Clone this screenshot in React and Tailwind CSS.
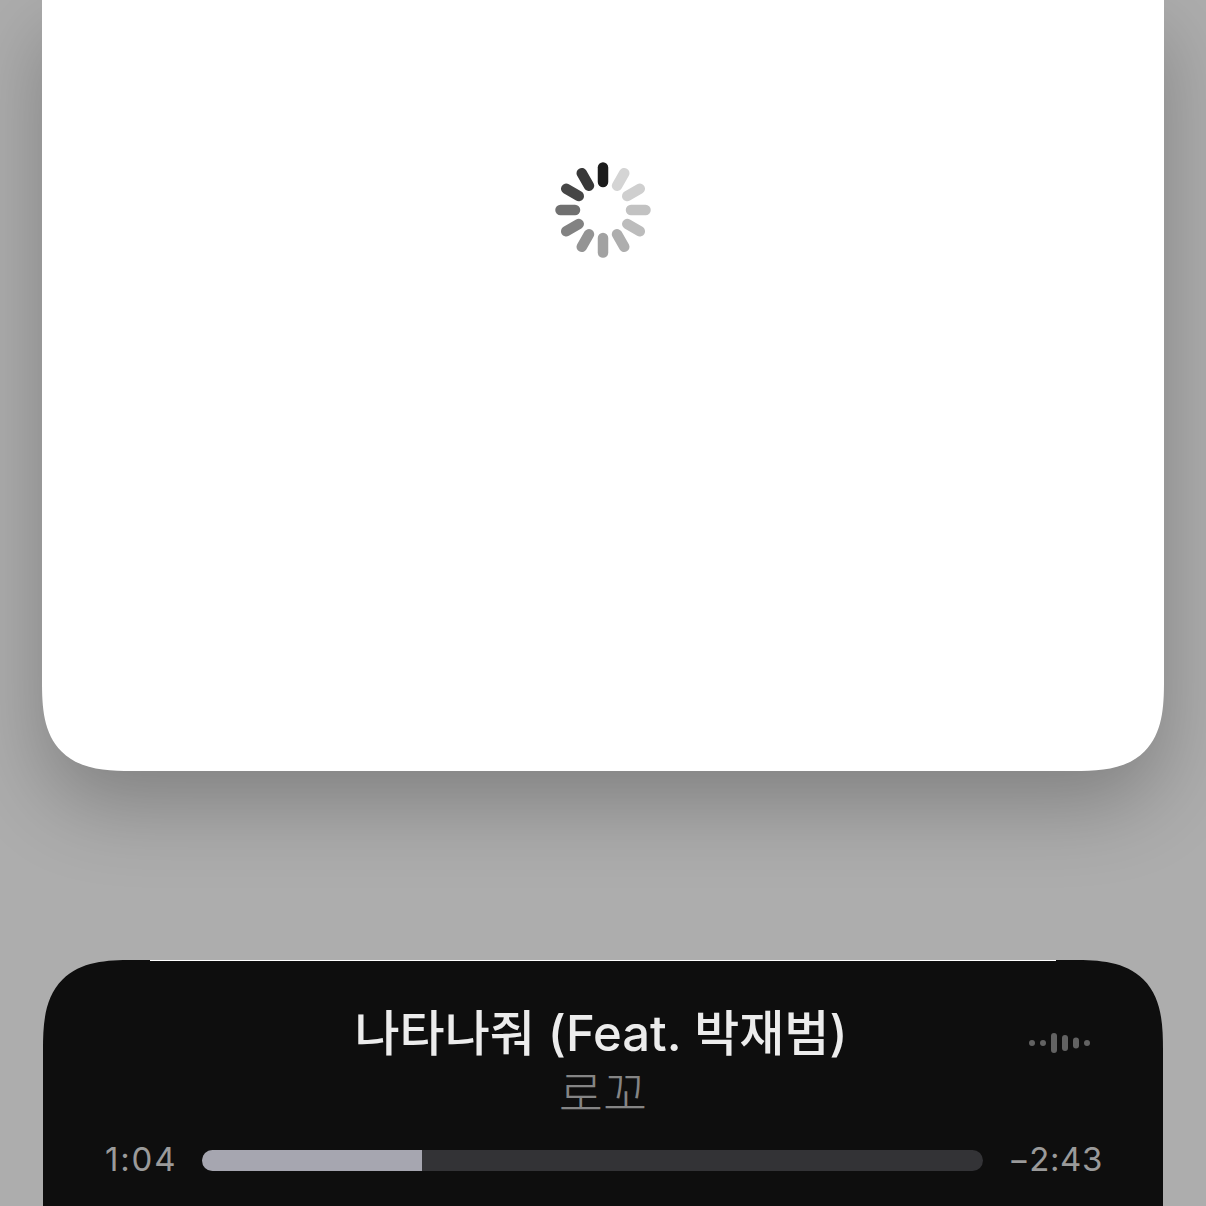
const TICKS = ["#1c1c1c", "#d4d4d4", "#cfcfcf", "#c2c2c2", "#bcbcbc", "#aeaeae", "#a2a2a2", "#949494", "#828282", "#707070", "#464646", "#383838"];

function Spinner() {
  return (
    <svg width="100" height="100" viewBox="-50 -50 100 100">
      {TICKS.map((color, i) => (
        <line
          key={i}
          x1="0"
          y1="-28"
          x2="0"
          y2="-42.5"
          stroke={color}
          strokeWidth="10.5"
          strokeLinecap="round"
          transform={`rotate(${i * 30})`}
        />
      ))}
    </svg>
  );
}

function Waveform() {
  return (
    <svg width="66" height="24" viewBox="0 0 66 24" fill="#626262">
      <circle cx="6" cy="12" r="3" />
      <circle cx="17" cy="12" r="3" />
      <rect x="25" y="2" width="6" height="20" rx="3" />
      <rect x="36" y="4" width="6" height="16" rx="3" />
      <rect x="47" y="6.5" width="6" height="11" rx="3" />
      <circle cx="61" cy="12" r="3" />
    </svg>
  );
}

export default function App() {
  return (
    <div className="h-[1206px] overflow-hidden bg-[#adadad] px-[42px] font-['Inter','Noto_Sans_CJK_KR',sans-serif]">
      {/* 카드 */}
      <div className="flex h-[771px] justify-center rounded-b-[90px] bg-white pt-[160px] shadow-[0_34px_80px_rgba(0,0,0,0.25)] [corner-shape:superellipse(1.5)]">
        <Spinner />
      </div>

      {/* 플레이어 */}
      <div className="relative mx-px mt-[189px] h-[246px] rounded-t-[90px] bg-[#0e0e0e] px-[61px] [corner-shape:superellipse(1.5)]">
        <div className="absolute left-[107px] right-[107px] top-0 h-px bg-white" />
        <div className="absolute right-[71px] top-[71px]">
          <Waveform />
        </div>
        <div className="flex flex-col items-center pt-[44px]">
          <p className="mr-[4px] text-[49px] font-medium leading-[59px] text-[#ececec]">
            나타나줘 (Feat. 박재범)
          </p>
          <p className="font-['Noto_Sans_CJK_KR',sans-serif] text-[48px] leading-[54px] font-light text-[#858585]">
            로꼬
          </p>
        </div>
        <div className="mt-[23px] flex h-[40px] items-center justify-between">
          <span className="mb-[2px] w-[98px] pl-px text-[33px] leading-[38px] tracking-[1.8px] text-[#9a9a9a]">1:04</span>
          <div className="h-[21px] w-[782px] overflow-hidden rounded-full bg-[#333336]">
            <div className="h-full w-[220px] bg-[#a6a6b0]" />
          </div>
          <span className="mb-[2px] mr-[-1px] w-[120px] text-right text-[33px] leading-[38px] tracking-[0.6px] text-[#9a9a9a]">−2:43</span>
        </div>
      </div>
    </div>
  );
}
